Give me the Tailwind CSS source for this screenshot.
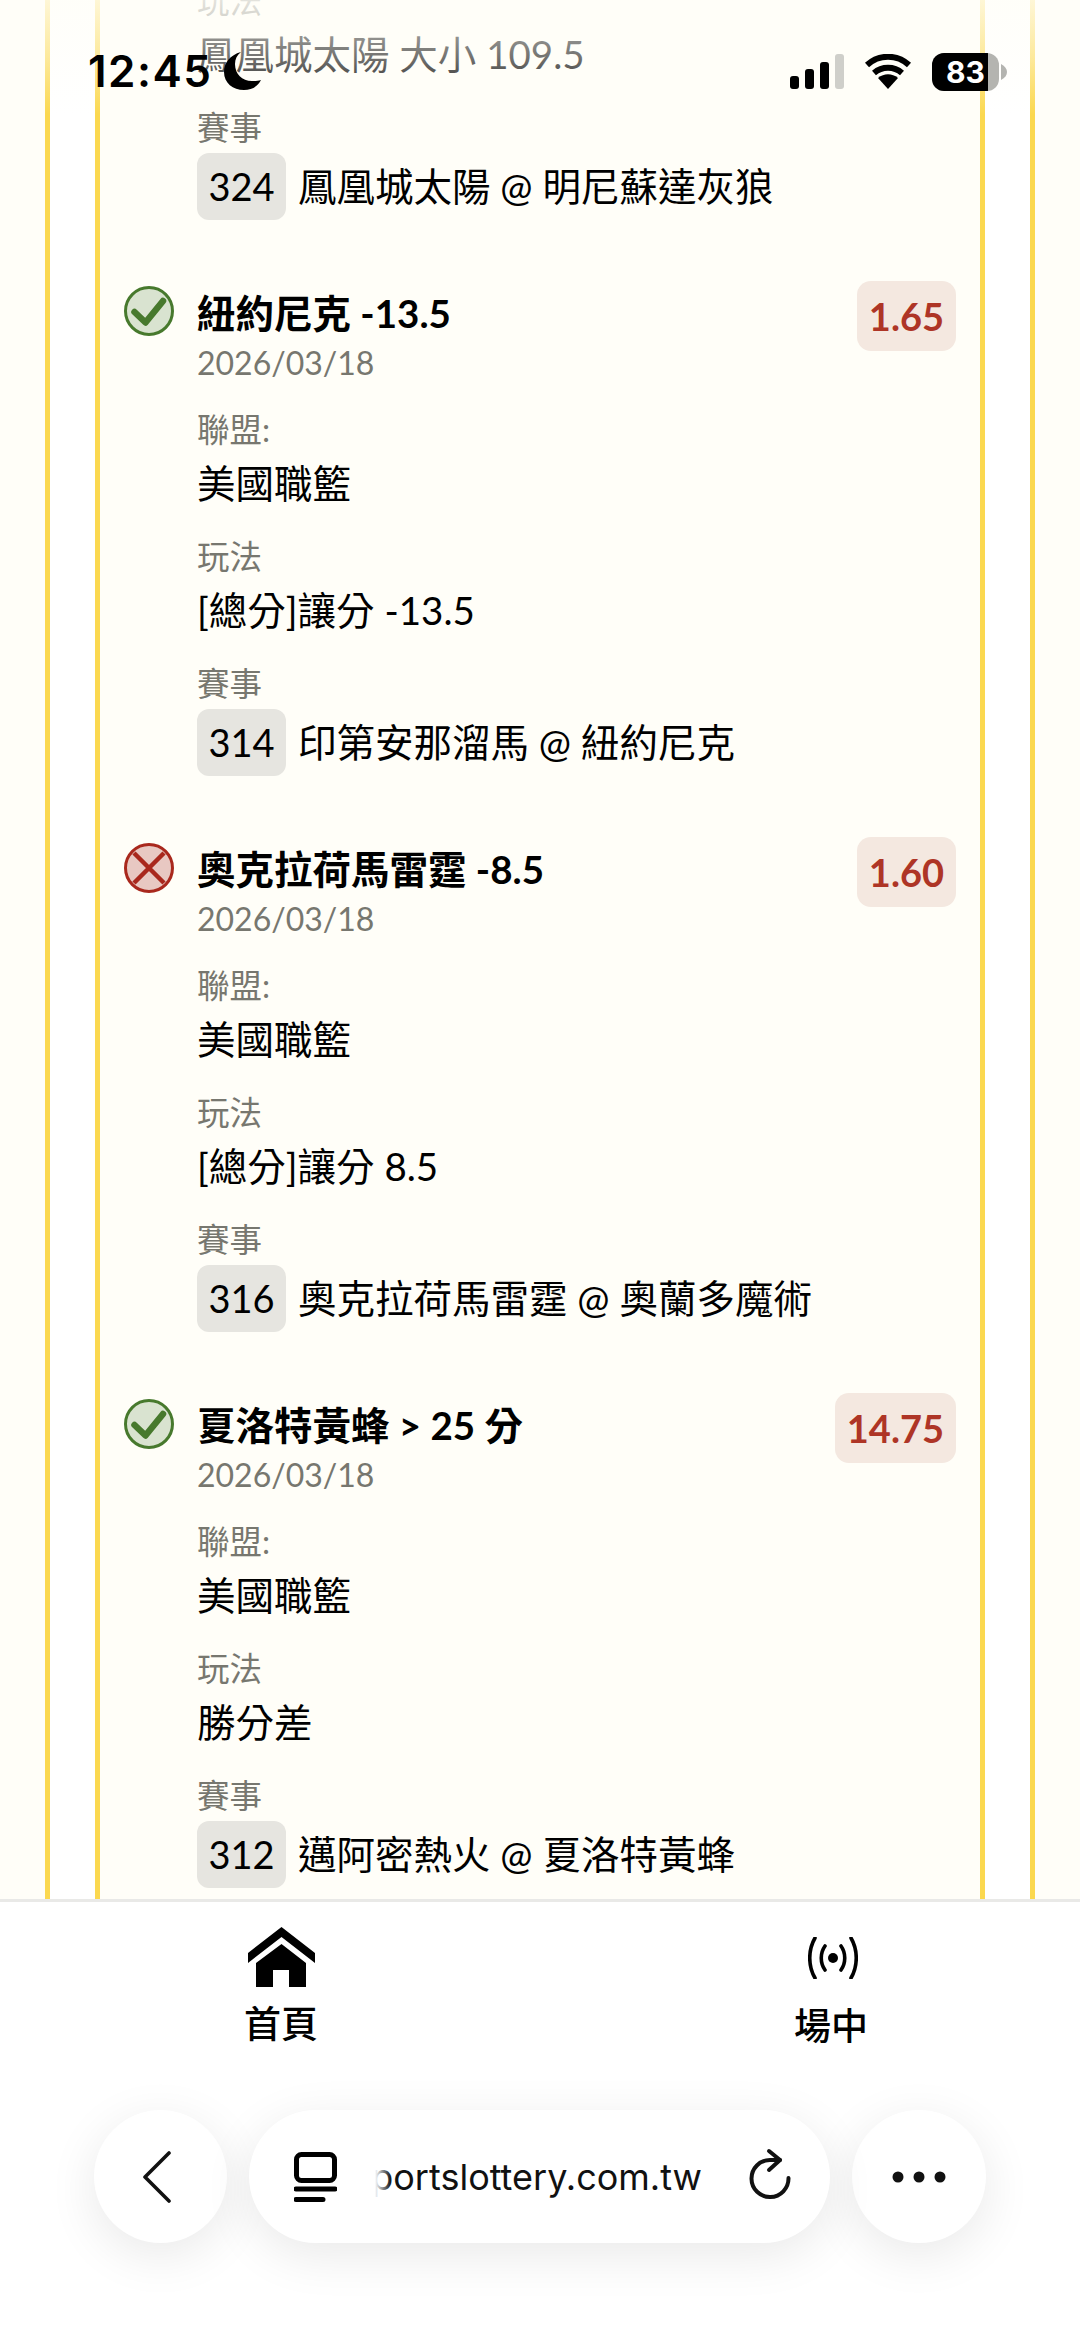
<!DOCTYPE html>
<html lang="zh-Hant"><head><meta charset="utf-8">
<script src="https://cdn.jsdelivr.net/npm/@tailwindcss/browser@4"></script>
<title>賽事</title></head>
<body class="m-0">
<div class="relative w-[1080px] h-[2337px] overflow-hidden bg-white text-black font-['Lato','Noto_Sans_CJK_TC',sans-serif]">

  <!-- scrolled page -->
  <main class="h-[1899px] overflow-hidden bg-[#fffef8] px-[45px]">
    <div class="h-full border-x-[5px] border-[#fbd84f] bg-white px-[45px]">
      <div class="flow-root h-full border-x-[5px] border-[#fbd84f] bg-[#fffef8] pl-[24px] pr-[24px]">

        <!-- partly scrolled item -->
        <div class="-mt-[22px] pl-[73px] pb-[61px]">
          <p class="text-[32.5px] leading-[46px] text-[#77776f]">玩法</p>
          <p class="text-[38.5px] leading-[60px] mb-[21px]">鳳凰城太陽 大小 109.5</p>
          <p class="text-[32.5px] leading-[46px] text-[#77776f]">賽事</p>
          <div class="mt-[2px] flex items-center gap-[12px] text-[38.5px]">
            <span class="flex h-[67px] w-[89px] items-center justify-center rounded-[12px] bg-[#e6e5e0] text-[38px]">324</span>
            <span>鳳凰城太陽 @ 明尼蘇達灰狼</span>
          </div>
        </div>

        <!-- item 1 -->
        <article class="flex gap-[23px] pb-[61px]">
          <svg class="mt-[5px] shrink-0" width="50" height="50" viewBox="0 0 50 50"><circle cx="25" cy="25" r="23.5" fill="#d9e3d0" stroke="#47792d" stroke-width="3"/><path d="M10.5 26 L21.5 36.5 L39 15" fill="none" stroke="#47792d" stroke-width="6.5" stroke-linecap="round" stroke-linejoin="round"/></svg>
          <div class="min-w-0 flex-1">
            <div class="flex items-start justify-between">
              <div class="pt-[5px]">
                <h3 class="text-[38.5px] leading-[54px] font-bold">紐約尼克 -13.5</h3>
                <p class="text-[32px] leading-[46px] text-[#77776f]">2026/03/18</p>
              </div>
              <span class="flex h-[70px] items-center rounded-[14px] bg-[#f4e8e0] px-[12px] text-[38px] font-bold text-[#ae3526]">1.65</span>
            </div>
            <p class="mt-[21px] text-[32.5px] leading-[46px] text-[#77776f]">聯盟:</p>
            <p class="text-[38.5px] leading-[60px] mb-[21px]">美國職籃</p>
            <p class="text-[32.5px] leading-[46px] text-[#77776f]">玩法</p>
            <p class="text-[38.5px] leading-[60px] mb-[21px]">[總分]讓分 -13.5</p>
            <p class="text-[32.5px] leading-[46px] text-[#77776f]">賽事</p>
            <div class="mt-[2px] flex items-center gap-[12px] text-[38.5px]">
              <span class="flex h-[67px] w-[89px] items-center justify-center rounded-[12px] bg-[#e6e5e0] text-[38px]">314</span>
              <span>印第安那溜馬 @ 紐約尼克</span>
            </div>
          </div>
        </article>

        <!-- item 2 -->
        <article class="flex gap-[23px] pb-[61px]">
          <svg class="mt-[6px] shrink-0" width="50" height="50" viewBox="0 0 50 50"><circle cx="25" cy="25" r="23.5" fill="#e8c8c2" stroke="#a9281d" stroke-width="3"/><path d="M10 10 L40 40 M40 10 L10 40" fill="none" stroke="#a9281d" stroke-width="4.5"/></svg>
          <div class="min-w-0 flex-1">
            <div class="flex items-start justify-between">
              <div class="pt-[5px]">
                <h3 class="text-[38.5px] leading-[54px] font-bold">奧克拉荷馬雷霆 -8.5</h3>
                <p class="text-[32px] leading-[46px] text-[#77776f]">2026/03/18</p>
              </div>
              <span class="flex h-[70px] items-center rounded-[14px] bg-[#f4e8e0] px-[12px] text-[38px] font-bold text-[#ae3526]">1.60</span>
            </div>
            <p class="mt-[21px] text-[32.5px] leading-[46px] text-[#77776f]">聯盟:</p>
            <p class="text-[38.5px] leading-[60px] mb-[21px]">美國職籃</p>
            <p class="text-[32.5px] leading-[46px] text-[#77776f]">玩法</p>
            <p class="text-[38.5px] leading-[60px] mb-[21px]">[總分]讓分 8.5</p>
            <p class="text-[32.5px] leading-[46px] text-[#77776f]">賽事</p>
            <div class="mt-[2px] flex items-center gap-[12px] text-[38.5px]">
              <span class="flex h-[67px] w-[89px] items-center justify-center rounded-[12px] bg-[#e6e5e0] text-[38px]">316</span>
              <span>奧克拉荷馬雷霆 @ 奧蘭多魔術</span>
            </div>
          </div>
        </article>

        <!-- item 3 -->
        <article class="flex gap-[23px] pb-[61px]">
          <svg class="mt-[6px] shrink-0" width="50" height="50" viewBox="0 0 50 50"><circle cx="25" cy="25" r="23.5" fill="#d9e3d0" stroke="#47792d" stroke-width="3"/><path d="M10.5 26 L21.5 36.5 L39 15" fill="none" stroke="#47792d" stroke-width="6.5" stroke-linecap="round" stroke-linejoin="round"/></svg>
          <div class="min-w-0 flex-1">
            <div class="flex items-start justify-between">
              <div class="pt-[5px]">
                <h3 class="text-[38.5px] leading-[54px] font-bold">夏洛特黃蜂 &gt; 25 分</h3>
                <p class="text-[32px] leading-[46px] text-[#77776f]">2026/03/18</p>
              </div>
              <span class="flex h-[70px] items-center rounded-[14px] bg-[#f4e8e0] px-[12px] text-[38px] font-bold text-[#ae3526]">14.75</span>
            </div>
            <p class="mt-[21px] text-[32.5px] leading-[46px] text-[#77776f]">聯盟:</p>
            <p class="text-[38.5px] leading-[60px] mb-[21px]">美國職籃</p>
            <p class="text-[32.5px] leading-[46px] text-[#77776f]">玩法</p>
            <p class="text-[38.5px] leading-[60px] mb-[21px]">勝分差</p>
            <p class="text-[32.5px] leading-[46px] text-[#77776f]">賽事</p>
            <div class="mt-[2px] flex items-center gap-[12px] text-[38.5px]">
              <span class="flex h-[67px] w-[89px] items-center justify-center rounded-[12px] bg-[#e6e5e0] text-[38px]">312</span>
              <span>邁阿密熱火 @ 夏洛特黃蜂</span>
            </div>
          </div>
        </article>
      </div>
    </div>
  </main>

  <!-- fade under status bar -->
  <div class="absolute inset-x-0 top-0 h-[115px] bg-gradient-to-b from-[#fffef8]/80 via-[#fffef8]/45 via-[50%] to-[#fffef8]/0"></div>

  <!-- status bar -->
  <div class="absolute left-0 top-0 h-[110px] w-full font-['Inter',sans-serif]">
    <span class="absolute left-[88px] top-[43px] text-[44px] leading-[56px] font-semibold tracking-[1.5px]">12:45</span>
    <svg class="absolute left-[224px] top-[52px]" width="38" height="38" viewBox="0 0 38 38"><path d="M17 0 C6 3 0 11 0 20 C0 31 9 38 20 38 C28 38 34 34 37 28 C34 29 31 29 28 29 C18 29 11 22 11 12 C11 7 13 3 17 0 Z" fill="#000"/></svg>
    <svg class="absolute left-[790px] top-[54px]" width="55" height="35" viewBox="0 0 55 35"><rect x="0" y="22" width="9" height="13" rx="3" fill="#000"/><rect x="15" y="15" width="9" height="20" rx="3" fill="#000"/><rect x="30" y="8" width="9" height="27" rx="3" fill="#000"/><rect x="45" y="0" width="9" height="35" rx="3" fill="#cfcfca"/></svg>
    <svg class="absolute left-[864px] top-[54px]" width="48" height="35" viewBox="0 0 48 35"><path d="M3 11 C15 0 33 0 45 11 M10 19 C18 12 30 12 38 19" fill="none" stroke="#000" stroke-width="6"/><path d="M14 24 C20 19 28 19 34 24 L24 35 Z" fill="#000"/></svg>
    <div class="absolute left-[932px] top-[53px] flex h-[38px] w-[67px] items-center justify-center overflow-hidden rounded-[12px] bg-[#b4b4b0]">
      <span class="absolute inset-y-0 left-0 w-[56px] bg-black"></span>
      <span class="relative text-[30px] leading-none font-bold text-white">83</span>
    </div>
    <svg class="absolute left-[1001px] top-[64px]" width="6" height="16" viewBox="0 0 6 16"><path d="M0 0 C4 2 6 5 6 8 C6 11 4 14 0 16 Z" fill="#b4b4b0"/></svg>
  </div>

  <!-- bottom tabs -->
  <nav class="absolute inset-x-0 top-[1899px] h-[438px] border-t-[3px] border-[#e9e9e7] bg-white">
    <div class="ml-[6px] grid w-[1100px] grid-cols-2">
      <a class="flex flex-col items-center">
        <svg class="mt-[25px]" width="67" height="60" viewBox="0 0 67 60"><path d="M33.5 0 L67 26 L67 36 L33.5 10 L0 36 L0 26 Z" fill="#000"/><path d="M33.5 17 L58 36 L58 60 L41 60 L41 43 L25 43 L25 60 L8 60 L8 36 Z" fill="#000"/></svg>
        <span class="mt-[15px] text-[37px] leading-[44px] font-medium">首頁</span>
      </a>
      <a class="flex flex-col items-center">
        <svg class="ml-[3px] mt-[35px]" width="50" height="42" viewBox="0 0 50 42"><circle cx="25" cy="21" r="5" fill="#000"/><path d="M17 9 C12 16 12 26 17 33 M33 9 C38 16 38 26 33 33 M7 1 C0 13 0 29 7 41 M43 1 C50 13 50 29 43 41" fill="none" stroke="#000" stroke-width="3.6" stroke-linecap="round"/></svg>
        <span class="mt-[25px] text-[37px] leading-[44px] font-medium">場中</span>
      </a>
    </div>
  </nav>

  <!-- browser toolbar -->
  <div class="absolute left-[94px] top-[2110px] flex h-[133px] w-[892px] gap-[22px] font-['Inter',sans-serif]">
    <button class="flex w-[133px] items-center justify-center rounded-full bg-white shadow-[0_12px_50px_rgba(0,0,0,0.09)]">
      <svg class="-ml-[8px]" width="30" height="52" viewBox="0 0 30 52"><path d="M27 2 L3 26 L27 50" fill="none" stroke="#111" stroke-width="3.6" stroke-linecap="round" stroke-linejoin="round"/></svg>
    </button>
    <div class="relative flex w-[581px] items-center rounded-full bg-white pl-[45px] shadow-[0_12px_50px_rgba(0,0,0,0.09)]">
      <svg width="43" height="50" viewBox="0 0 43 50"><rect x="2.5" y="2.5" width="38" height="26" rx="5" fill="none" stroke="#000" stroke-width="5"/><path d="M2 37 H41 M2 47.5 H29" stroke="#000" stroke-width="5" stroke-linecap="round"/></svg>
      <div class="relative ml-[38px] flex h-[60px] w-[327px] items-center justify-end overflow-hidden">
        <span class="whitespace-nowrap text-[36px] leading-none text-[#111]">sportslottery.com.tw</span>
        <span class="absolute inset-y-0 left-0 w-[16px] bg-gradient-to-r from-white to-white/0"></span>
      </div>
      <svg class="ml-[47px] -mt-[6px]" width="43" height="52" viewBox="0 0 43 52"><path d="M31 12 H21 A18.5 18.5 0 1 0 39.5 30" fill="none" stroke="#111" stroke-width="4" stroke-linecap="round"/><path d="M20 3 L31 12 L20 22" fill="none" stroke="#111" stroke-width="4" stroke-linecap="round" stroke-linejoin="round"/></svg>
    </div>
    <button class="flex w-[134px] items-center justify-center rounded-full bg-white shadow-[0_12px_50px_rgba(0,0,0,0.09)]">
      <svg width="54" height="12" viewBox="0 0 54 12"><circle cx="6" cy="6" r="5.5" fill="#111"/><circle cx="27" cy="6" r="5.5" fill="#111"/><circle cx="48" cy="6" r="5.5" fill="#111"/></svg>
    </button>
  </div>
</div>
</body></html>
